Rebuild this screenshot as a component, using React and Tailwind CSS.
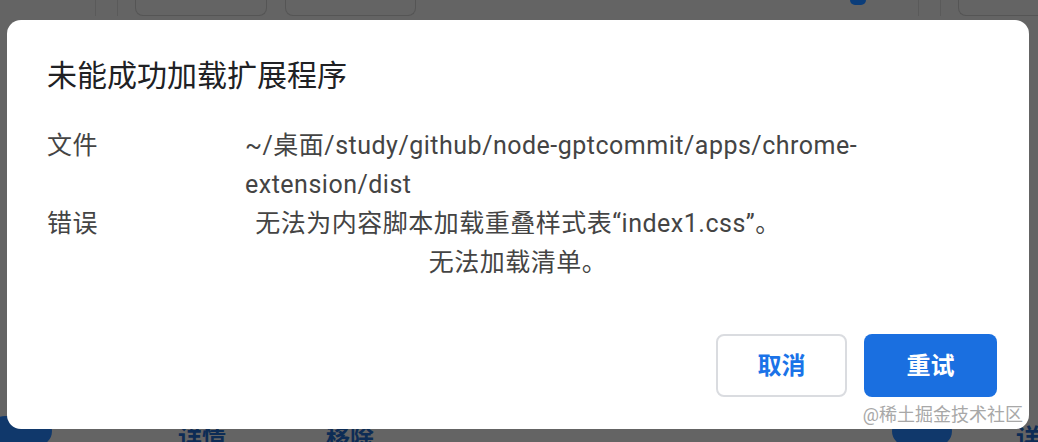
export default function App() {
  const font = { fontFamily: "Roboto, 'Noto Sans CJK SC', sans-serif" };
  return (
    <div className="relative w-[1038px] h-[442px] overflow-hidden bg-[#646464]" style={font}>
      {/* dimmed extensions page behind the dialog */}
      <div className="h-full flex flex-col justify-between">
        <div className="flex items-start h-[16px]">
          <div className="w-[95px] shrink-0" />
          <div className="w-[23px] h-full shrink-0 border-x border-[#5a5a5a]" />
          <div className="ml-[17px] w-[132px] h-[16px] shrink-0 rounded-b-[8px] border border-t-0 border-[#555]" />
          <div className="ml-[18px] w-[131px] h-[16px] shrink-0 rounded-b-[8px] border border-t-0 border-[#555]" />
          <div className="ml-[434px] w-[16px] h-[5px] shrink-0 rounded-b-full bg-[#0b3d7a]" />
          <div className="ml-[52px] w-[23px] h-full shrink-0 border-x border-[#5a5a5a]" />
          <div className="ml-[17px] flex-1 h-[16px] rounded-bl-[8px] border border-t-0 border-r-0 border-[#555]" />
        </div>
        <div className="flex items-start h-[16px] whitespace-nowrap">
          <div className="-ml-[10px] w-[62px] h-[30px] shrink-0 -mt-[10px] rounded-full bg-[#10386b]" />
          <div className="ml-[126px] shrink-0 text-[24px] font-bold text-[#0d2c55] leading-none">详情</div>
          <div className="ml-[100px] shrink-0 text-[24px] font-bold text-[#0d2c55] leading-none">移除</div>
          <div className="ml-[518px] w-[60px] h-[30px] shrink-0 -mt-[10px] rounded-full bg-[#10386b]" />
          <div className="ml-[64px] shrink-0 text-[24px] font-bold text-[#0d2c55] leading-none">详情</div>
        </div>
      </div>

      {/* dialog */}
      <div className="absolute left-[7px] top-[20px] w-[1022px] h-[409px] rounded-[14px] bg-white flex flex-col pl-[40px] pr-[32px] pt-[38px] pb-[32px]">
        <h1 className="text-[30px] leading-[36px] text-[#202124]">未能成功加载扩展程序</h1>

        <div className="mt-[32px] flex flex-col text-[25px] leading-[39px] tracking-[0.5px] text-[#444]">
          <div className="flex">
            <div className="w-[198px] shrink-0">文件</div>
            <div>
              ~/桌面/study/github/node-gptcommit/apps/chrome-
              <br />
              extension/dist
            </div>
          </div>
          <div className="flex">
            <div className="w-[198px] shrink-0">错误</div>
            <div className="w-[546px] text-center">
              无法为内容脚本加载重叠样式表“index1.css”。
              <br />
              无法加载清单。
            </div>
          </div>
        </div>

        <div className="mt-auto flex justify-end gap-[17px]">
          <button className="w-[131px] h-[63px] rounded-[8px] border-2 border-[#dadce0] bg-white text-[24px] font-bold text-[#1a73e8]">
            取消
          </button>
          <button className="w-[133px] h-[63px] rounded-[8px] bg-[#1a6fe0] text-[24px] font-bold text-white">
            重试
          </button>
        </div>

        <div className="absolute right-[6px] bottom-[3px] text-[18px] leading-[22px] text-[#a8a8a8]">
          @稀土掘金技术社区
        </div>
      </div>
    </div>
  );
}
